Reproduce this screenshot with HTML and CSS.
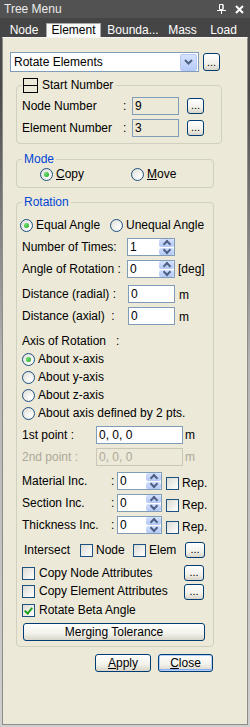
FILE: index.html
```html
<!DOCTYPE html>
<html>
<head>
<meta charset="utf-8">
<link rel="stylesheet" href="styles.css">
</head>
<body>
<div class="win">
  <div class="titlebar">
    <span class="title">Tree Menu</span>
    <span class="tb-icons">
      <svg width="9" height="10" viewBox="0 0 9 10"><path d="M2.5 0.5h3.5v5h-3.5z M6 0.5v5" stroke="#fff" fill="none"/><path d="M0 6.5h9 M4.5 6.5v3.5" stroke="#fff" fill="none"/></svg>
      <svg width="9" height="9" viewBox="0 0 9 9"><path d="M1 1L8 8M8 1L1 8" stroke="#fff" stroke-width="2"/></svg>
    </span>
  </div>
  <div class="tabs">
    <span class="tab t-node">Node</span>
    <span class="tab t-elem active">Element</span>
    <span class="tab t-bnd">Bounda...</span>
    <span class="tab t-mass">Mass</span>
    <span class="tab t-load">Load</span>
  </div>
  <div class="panel">
    <div class="combo-row">
      <div class="combo">
        <span class="combo-text">Rotate Elements</span>
        <span class="combo-btn"><svg width="9" height="6" viewBox="0 0 9 6"><path d="M1 1l3.5 3.5L8 1" stroke="#4d6185" stroke-width="2" fill="none"/></svg></span>
      </div>
      <button class="btn ell ell-combo">...</button>
    </div>

    <fieldset class="grp g-start">
      <legend class="lg-start"><span class="collapse"></span>Start Number</legend>
      <div class="row">
        <span class="lbl w-start">Node Number</span><span class="colon">:</span>
        <span class="field ro w-num">9</span>
        <button class="btn ell ell-start">...</button>
      </div>
      <div class="row mt4">
        <span class="lbl w-start">Element Number</span><span class="colon">:</span>
        <span class="field ro w-num">3</span>
        <button class="btn ell ell-start">...</button>
      </div>
    </fieldset>

    <fieldset class="grp g-mode">
      <legend class="blue">Mode</legend>
      <div class="mode-row">
        <label class="rb copy-opt"><i class="radio on"></i><u>C</u>opy</label>
        <label class="rb"><i class="radio"></i><u>M</u>ove</label>
      </div>
    </fieldset>

    <fieldset class="grp g-rot">
      <legend class="blue">Rotation</legend>
      <div class="row h17 shift-l">
        <label class="rb eq-opt"><i class="radio on"></i>Equal Angle</label>
        <label class="rb"><i class="radio"></i>Unequal Angle</label>
      </div>
      <div class="row mt4">
        <span class="lbl w-rot">Number of Times:</span>
        <span class="field w-spin1">1<span class="arrows"><i class="up"></i><i class="dn"></i></span></span>
      </div>
      <div class="row mt4">
        <span class="lbl w-rot">Angle of Rotation :</span>
        <span class="field w-spin1">0<span class="arrows"><i class="up"></i><i class="dn"></i></span></span>
        <span class="unit-deg">[deg]</span>
      </div>
      <div class="row mt7">
        <span class="lbl w-rot2">Distance (radial) :</span>
        <span class="field w-dist">0</span>
        <span class="unit">m</span>
      </div>
      <div class="row mt4">
        <span class="lbl w-rot2">Distance (axial)&nbsp; :</span>
        <span class="field w-dist">0</span>
        <span class="unit">m</span>
      </div>
      <div class="row h16 mt8">
        <span class="lbl">Axis of Rotation&nbsp;&nbsp; :</span>
      </div>
      <div class="row mt1"><label class="rb"><i class="radio on"></i>About x-axis</label></div>
      <div class="row"><label class="rb"><i class="radio"></i>About y-axis</label></div>
      <div class="row"><label class="rb"><i class="radio"></i>About z-axis</label></div>
      <div class="row"><label class="rb"><i class="radio"></i>About axis defined by 2 pts.</label></div>
      <div class="row mt4">
        <span class="lbl w-pt">1st point :</span>
        <span class="field w-pt-in">0, 0, 0</span>
        <span class="unit2">m</span>
      </div>
      <div class="row mt4 disabled">
        <span class="lbl w-pt">2nd point :</span>
        <span class="field dis w-pt-in">0, 0, 0</span>
        <span class="unit2">m</span>
      </div>
      <div class="row mt6">
        <span class="lbl w-inc">Material Inc.</span><span class="colon2">:</span>
        <span class="field w-spin2">0<span class="arrows"><i class="up"></i><i class="dn"></i></span></span>
        <span class="rep"><i class="chk"></i>Rep.</span>
      </div>
      <div class="row mt4">
        <span class="lbl w-inc">Section Inc.</span><span class="colon2">:</span>
        <span class="field w-spin2">0<span class="arrows"><i class="up"></i><i class="dn"></i></span></span>
        <span class="rep"><i class="chk"></i>Rep.</span>
      </div>
      <div class="row mt4">
        <span class="lbl w-inc">Thickness Inc.</span><span class="colon2">:</span>
        <span class="field w-spin2">0<span class="arrows"><i class="up"></i><i class="dn"></i></span></span>
        <span class="rep"><i class="chk"></i>Rep.</span>
      </div>
      <div class="row h16 mt8">
        <span class="lbl w-isect">Intersect</span>
        <label class="cb w-node"><i class="chk"></i>Node</label>
        <label class="cb w-elemcb"><i class="chk"></i>Elem</label>
        <button class="btn ell ell-row">...</button>
      </div>
      <div class="row mt6">
        <label class="cb"><i class="chk"></i>Copy Node Attributes</label>
        <button class="btn ell ell-row push">...</button>
      </div>
      <div class="row h19">
        <label class="cb"><i class="chk"></i>Copy Element Attributes</label>
        <button class="btn ell ell-row push">...</button>
      </div>
      <div class="row h19">
        <label class="cb"><i class="chk on"></i>Rotate Beta Angle</label>
      </div>
      <button class="btn merge">Merging Tolerance</button>
    </fieldset>

    <div class="actions">
      <button class="btn act"><u>A</u>pply</button>
      <button class="btn act def"><u>C</u>lose</button>
    </div>
  </div>
</div>
</body>
</html>
```
FILE: styles.css
```css
* { box-sizing: border-box; }
html, body { margin: 0; padding: 0; }
body {
  width: 250px;
  height: 727px;
  overflow: hidden;
  background: #c9c7bd;
  font: 12px/15px "Liberation Sans", Arial, sans-serif;
  color: #000;
}
.win {
  height: 727px;
  display: flex;
  flex-direction: column;
  background: linear-gradient(#4a4a4a 0, #4a4a4a 90px, #b4b4b4 360px, #cfcfcf 727px);
}
.titlebar {
  height: 18px;
  background: #525252;
  color: #ececec;
  display: flex;
  align-items: center;
  padding-left: 4px;
}
.title { flex: 1; }
.tb-icons {
  display: flex;
  align-items: center;
  gap: 9px;
  margin-right: 6px;
}
.tabs {
  height: 19px;
  background: #454545;
  display: flex;
  align-items: flex-end;
  padding-left: 4px;
}
.tab {
  height: 14px;
  line-height: 14px;
  color: #fff;
  text-align: center;
}
.t-node { width: 40px; }
.t-elem { width: 55px; margin-left: 2px; }
.t-bnd { width: 60px; margin-left: 2px; }
.t-mass { width: 39px; }
.t-load { width: 39px; margin-left: 2px; }
.tab.active {
  background: #fafafa;
  color: #000;
  border: 1px solid #a8a8a8;
  border-bottom: none;
  line-height: 13px;
}
.panel {
  flex: 1;
  margin: 0 2px 2px 2px;
  background: #ece9d8;
  border: 1px solid #8c8c8c;
  border-top-color: #f4f4f4;
  padding: 14px 0 0 7px;
}
.combo-row {
  display: flex;
  align-items: center;
  height: 20px;
}
.combo {
  width: 189px;
  height: 20px;
  border: 1px solid #7f9db9;
  background: #fff;
  display: flex;
  align-items: center;
  padding-left: 3px;
}
.combo-text { flex: 1; }
.combo-btn {
  width: 17px;
  height: 17px;
  margin-right: 1px;
  border-radius: 2px;
  background: linear-gradient(#d6e2fe, #b6cbf8);
  border: 1px solid #b9c9ef;
  display: flex;
  align-items: center;
  justify-content: center;
}
.btn {
  font: inherit;
  color: #000;
  padding: 0;
  border: 1px solid #003c74;
  border-radius: 3px;
  background: linear-gradient(#ffffff, #f2f1ea 60%, #d8d5c8);
  display: flex;
  align-items: center;
  justify-content: center;
}
.ell {
  font-size: 11px;
  line-height: 10px;
  align-items: flex-end;
  padding-bottom: 3px;
  letter-spacing: 0;
}
.ell-combo { width: 17px; height: 18px; margin-left: 4px; }
.ell-start { width: 17px; height: 16px; margin-left: 8px; }
.ell-row { width: 20px; height: 16px; }
.push { margin-left: auto; margin-right: 4px; }

fieldset.grp {
  margin: 0 0 0 6px;
  padding: 0 5px;
  border: 1px solid #d0d0bf;
  border-radius: 4px;
  min-width: 0;
}
fieldset legend {
  padding: 0 2px;
  height: 15px;
  line-height: 15px;
}
.blue { color: #0046d5; }
.g-start {
  width: 206px;
  margin-top: 6px !important;
  padding: 4px 5px 6px !important;
}
.lg-start {
  display: flex;
  align-items: center;
  padding: 0 3px 0 1px;
}
.collapse {
  width: 15px;
  height: 15px;
  border: 1px solid #000;
  margin-right: 4px;
  display: flex;
  align-items: center;
}
.collapse::after {
  content: "";
  display: block;
  width: 100%;
  height: 1px;
  background: #000;
}
.g-mode {
  width: 198px;
  margin-top: 8px !important;
  padding: 0 5px 5px !important;
}
.mode-row {
  height: 15px;
  display: flex;
  align-items: center;
  padding-left: 18px;
}
.copy-opt { width: 91px; }
.g-rot {
  width: 198px;
  margin-top: 7px !important;
  padding: 7px 5px 5px !important;
}
.row {
  display: flex;
  align-items: center;
  height: 18px;
}
.h16 { height: 16px; }
.h17 { height: 17px; }
.h19 { height: 19px; }
.mt1 { margin-top: 1px; }
.mt4 { margin-top: 4px; }
.mt6 { margin-top: 6px; }
.mt7 { margin-top: 7px; }
.mt8 { margin-top: 8px; }
.shift-l { margin-left: -2px; }
.eq-opt { width: 90px; }
.lbl { white-space: pre; }
.w-start { width: 101px; }
.colon { width: 9px; }
.w-num { width: 47px; }
.w-rot { width: 105px; }
.w-rot2 { width: 106px; }
.w-pt { width: 74px; }
.w-inc { width: 89px; }
.colon2 { width: 6px; }
.field {
  height: 18px;
  border: 1px solid #7f9db9;
  background: #fff;
  display: flex;
  align-items: center;
  padding-left: 2px;
}
.field.ro { background: #ece9d8; }
.field.dis {
  background: #ece9d8;
  border-color: #c9c7ba;
  color: #aca899;
}
.disabled .lbl, .disabled .unit2 { color: #aca899; }
.w-spin1 { width: 48px; }
.w-spin2 { width: 45px; }
.w-dist { width: 47px; }
.w-pt-in { width: 87px; }
.arrows {
  margin-left: auto;
  width: 15px;
  height: 16px;
  display: flex;
  flex-direction: column;
  gap: 1px;
}
.arrows i {
  flex: 1;
  border-radius: 2px;
  background: linear-gradient(#d3e0fd, #b4c8f6);
  display: flex;
  align-items: center;
  justify-content: center;
}
.arrows i::after {
  content: "";
  width: 4px;
  height: 4px;
  border-left: 2px solid #4d6185;
  border-top: 2px solid #4d6185;
}
.arrows .up::after { transform: translateY(1px) rotate(45deg); }
.arrows .dn::after { transform: translateY(-1px) rotate(225deg); }
.unit-deg { margin-left: 3px; }
.unit { margin-left: 4px; align-self: flex-end; line-height: 15px; }
.unit2 { margin-left: 2px; }

.rb, .cb {
  display: flex;
  align-items: center;
  white-space: nowrap;
}
.radio {
  width: 13px;
  height: 13px;
  border-radius: 50%;
  border: 1px solid #1c5180;
  background: radial-gradient(circle at 70% 70%, #ffffff, #dcdbd3);
  margin-right: 3px;
  display: flex;
  align-items: center;
  justify-content: center;
  flex: none;
}
.radio.on::after {
  content: "";
  width: 5px;
  height: 5px;
  border-radius: 50%;
  background: radial-gradient(circle at 35% 35%, #6ee06e, #21a121);
}
.chk {
  width: 13px;
  height: 13px;
  border: 1px solid #1c5180;
  background: linear-gradient(135deg, #dcdbd3, #ffffff);
  margin-right: 4px;
  flex: none;
  display: flex;
  align-items: center;
  justify-content: center;
}
.chk.on::after {
  content: "";
  width: 3px;
  height: 6px;
  border-right: 2px solid #21a121;
  border-bottom: 2px solid #21a121;
  transform: translateY(-1px) rotate(40deg);
}
.rep {
  display: flex;
  align-items: center;
  align-self: flex-end;
  margin-left: 4px;
  margin-bottom: -1px;
}
.rep .chk { margin-right: 3px; }
.w-isect { width: 56px; margin-left: 2px; }
.w-node { width: 53px; }
.w-node .chk, .w-elemcb .chk { margin-right: 3px; }
.w-elemcb { width: 52px; }
.merge {
  width: 182px;
  height: 18px;
  margin: 3px 0 0 1px;
}
.actions {
  display: flex;
  gap: 7px;
  margin: 7px 0 0 85px;
}
.act { height: 18px; width: 56px; }
.act.def {
  width: 55px;
  box-shadow: inset 0 0 0 1px #b8d0f8, inset 0 -1px 0 1px #89aef0;
}
```
